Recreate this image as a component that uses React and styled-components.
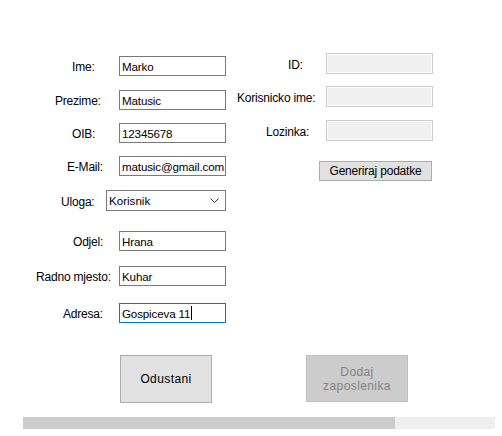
import React from 'react'
import styled, { createGlobalStyle } from 'styled-components'

const GlobalStyle = createGlobalStyle`
  html, body {
    margin: 0;
    padding: 0;
    background: #fff;
  }
  body {
    font-family: "Liberation Sans", Arial, sans-serif;
    font-size: 12px;
    color: #000;
  }
`

const Window = styled.div`
  width: 502px;
  height: 436px;
  background: #fff;
  display: flex;
  flex-direction: column;
  overflow: hidden;
`

const Fields = styled.div`
  display: grid;
  grid-template-columns: 237px 1fr;
`

const Column = styled.div`
  display: flex;
  flex-direction: column;
  padding-top: ${p => p.$top}px;
`

const Row = styled.div`
  display: flex;
  align-items: center;
  height: ${p => p.$h || 20}px;
  margin-top: ${p => p.$gap || 0}px;
`

const LabelCell = styled.div`
  box-sizing: border-box;
  flex: none;
  width: ${p => p.$w}px;
  padding-left: ${p => p.$x}px;
  padding-top: 2px;
  white-space: nowrap;
  letter-spacing: -0.2px;
`

const TextBox = styled.div`
  box-sizing: border-box;
  width: ${p => p.$w || 107}px;
  height: 100%;
  display: flex;
  align-items: center;
  padding: 0 2px;
  background: #fff;
  border: 1px solid ${p => (p.$focused ? '#0078d7' : '#7a7a7a')};
  font-size: 11.6px;
  letter-spacing: -0.15px;
  white-space: nowrap;
  overflow: hidden;
`

const DisabledBox = styled.div`
  box-sizing: border-box;
  width: 107px;
  height: 100%;
  background: #f0f0f0;
  border: 1px solid #cccccc;
  box-shadow: inset 0 0 0 1px #fbfbfb;
`

const Caret = styled.span`
  display: inline-block;
  width: 1px;
  height: 14px;
  background: #000;
  margin-left: 1px;
`

const Combo = styled.div`
  box-sizing: border-box;
  width: 120px;
  height: 100%;
  display: flex;
  align-items: center;
  justify-content: space-between;
  padding: 0 6px 0 2px;
  background: #fff;
  border: 1px solid #7a7a7a;
  font-size: 11.6px;
`

const Button = styled.div`
  box-sizing: border-box;
  width: ${p => p.$w}px;
  height: ${p => p.$h}px;
  margin-left: ${p => p.$left || 0}px;
  display: flex;
  align-items: center;
  justify-content: center;
  text-align: center;
  line-height: 14px;
  background: ${p => (p.$disabled ? '#cccccc' : '#e1e1e1')};
  border: 1px solid ${p => (p.$disabled ? '#bfbfbf' : '#adadad')};
  color: ${p => (p.$disabled ? '#838383' : '#000')};
  letter-spacing: ${p => (p.$spaced ? '0.4px' : '-0.2px')};
`

const ButtonRow = styled.div`
  display: flex;
  margin-top: 32px;
  padding-left: 120px;
  gap: 94px;
`

const Progress = styled.div`
  margin: 14px 0 0 23px;
  width: 472px;
  height: 12px;
  background: #efefef;
  display: flex;
`

const ProgressFill = styled.div`
  height: 100%;
  background: #cccccc;
`

const leftRows = [
  { label: 'Ime:', x: 72, gap: 0, value: 'Marko' },
  { label: 'Prezime:', x: 55, gap: 14, value: 'Matusic' },
  { label: 'OIB:', x: 72, gap: 13, value: '12345678' },
  { label: 'E-Mail:', x: 67, gap: 13, value: 'matusic@gmail.com' },
]

const lowerRows = [
  { label: 'Odjel:', x: 73, gap: 20, value: 'Hrana' },
  { label: 'Radno mjesto:', x: 36, gap: 15, value: 'Kuhar' },
  { label: 'Adresa:', x: 63, gap: 17, value: 'Gospiceva 11', focused: true },
]

const rightRows = [
  { label: 'ID:', x: 51, gap: 0 },
  { label: 'Korisnicko ime:', x: 0, gap: 12 },
  { label: 'Lozinka:', x: 29, gap: 13 },
]

function Chevron() {
  return (
    <svg width="9" height="5" viewBox="0 0 9 5">
      <path d="M0.5 0.5 L4.5 4.5 L8.5 0.5" fill="none" stroke="#333" strokeWidth="1" />
    </svg>
  )
}

export default function App() {
  return (
    <Window>
      <GlobalStyle />
      <Fields>
        <Column $top={56}>
          {leftRows.map(r => (
            <Row key={r.label} $gap={r.gap}>
              <LabelCell $w={119} $x={r.x}>{r.label}</LabelCell>
              <TextBox>{r.value}</TextBox>
            </Row>
          ))}
          <Row $gap={14} $h={21}>
            <LabelCell $w={106} $x={61}>Uloga:</LabelCell>
            <Combo>
              <span>Korisnik</span>
              <Chevron />
            </Combo>
          </Row>
          {lowerRows.map(r => (
            <Row key={r.label} $gap={r.gap}>
              <LabelCell $w={119} $x={r.x}>{r.label}</LabelCell>
              <TextBox $focused={r.focused}>
                {r.value}
                {r.focused && <Caret />}
              </TextBox>
            </Row>
          ))}
        </Column>
        <Column $top={53}>
          {rightRows.map(r => (
            <Row key={r.label} $gap={r.gap} $h={21}>
              <LabelCell $w={89} $x={r.x}>{r.label}</LabelCell>
              <DisabledBox />
            </Row>
          ))}
          <Row $gap={20}>
            <Button $w={113} $h={20} $left={82}>Generiraj podatke</Button>
          </Row>
        </Column>
      </Fields>
      <ButtonRow>
        <Button $w={92} $h={48} $spaced>Odustani</Button>
        <Button $w={102} $h={47} $disabled $spaced>
          Dodaj<br />zaposlenika
        </Button>
      </ButtonRow>
      <Progress>
        <ProgressFill style={{ width: `${(372 / 472) * 100}%` }} />
      </Progress>
    </Window>
  )
}
